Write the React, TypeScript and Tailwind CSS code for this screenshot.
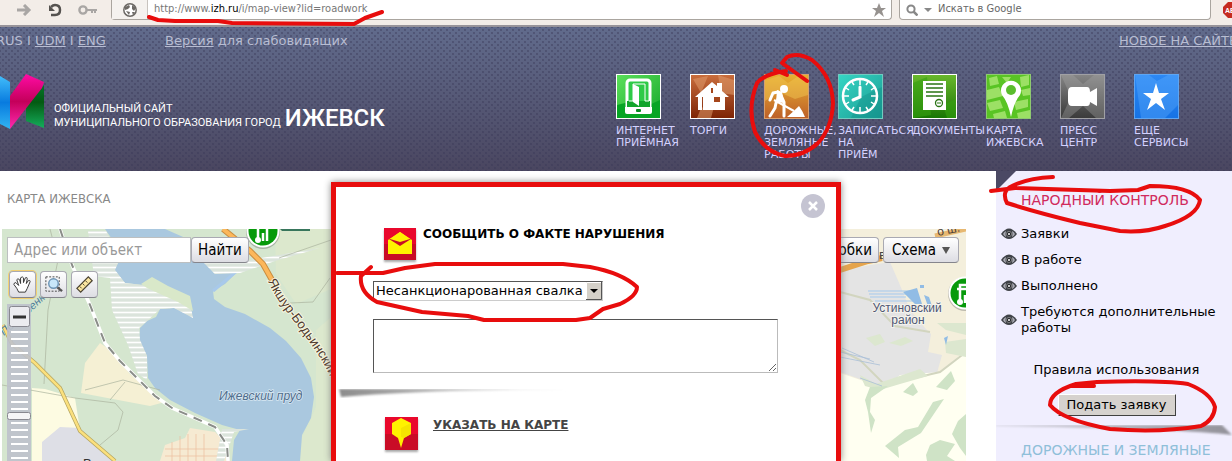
import type { ReactNode } from "react";

type NavItem = { label: string; lines: string[]; tile: string; icon: ReactNode };

const NAV_ITEMS: NavItem[] = [
  {
    label: "Интернет приёмная",
    lines: ["ИНТЕРНЕТ", "ПРИЁМНАЯ"],
    tile: "border-white bg-linear-to-br from-[#5ae05a] to-[#08a82c]",
    icon: (
      <>
        <path d="M0 30 16 26 30 31 43 25V43H0z" fill="#07a524" />
        <rect x="10" y="5" width="23" height="32" rx="3" fill="#2fca48" stroke="#fff" strokeWidth="3" />
        <path d="M10 26h23v6H10z" fill="#12a52c" />
        <path d="M8 32h27v5q0 2-2 2H10q-2 0-2-2z" fill="#fff" />
        <path d="M12 26h4V9h12v17h4" fill="none" stroke="#fff" />
        <path d="m16 9 6 3v19l-6-4z" fill="#fff" />
        <rect x="19" y="34" width="5" height="3" rx="1" fill="#078b22" />
      </>
    ),
  },
  {
    label: "Торги",
    lines: ["ТОРГИ"],
    tile: "border-white bg-linear-to-b from-[#c96d3c] to-[#7e2404]",
    icon: (
      <>
        <path d="M2 4 17 1 10 18zM27 0 43 5V20L30 18zM10 33 24 28 20 43H6z" fill="#de9a6c" opacity=".55" />
        <path d="M4 22 21 7l5 4V8h5v8l7 6h-4v13h-22v-13h-1v13H7V22z" fill="#fff" />
        <path d="M20 13h2v5h-2zM23 22h6v5h-6z" fill="#a6461b" />
      </>
    ),
  },
  {
    label: "Дорожные, земляные работы",
    lines: ["ДОРОЖНЫЕ,", "ЗЕМЛЯНЫЕ", "РАБОТЫ"],
    tile: "border-[#d8a070] bg-linear-to-b from-[#e8b030] to-[#bd6028]",
    icon: (
      <>
        <path d="M0 5 14 1 23 8 35 0 43 5V20L30 24 14 17 0 26z" fill="#f0c452" opacity=".5" />
        <circle cx="19" cy="14" r="4" fill="#fff" />
        <path d="m15 19-3 8M15 18l4 9v14M11 28l-1 5-5 8M13 17l-5 1-3 7" fill="none" stroke="#fff" strokeWidth="3" strokeLinecap="round" strokeLinejoin="round" />
        <path d="m12 15 5 2 2 11-8-1z" fill="#fff" />
        <path d="M9 25 29 36" stroke="#fff" strokeWidth="2" />
        <path d="M22 42q7-6 12-11 3 4 6 11z" fill="#fff" />
      </>
    ),
  },
  {
    label: "Записаться на приём",
    lines: ["ЗАПИСАТЬСЯ", "НА", "ПРИЁМ"],
    tile: "border-[#70cbbf] bg-linear-to-br from-[#36d6c4] to-[#199c94]",
    icon: (
      <>
        <path d="M22 22 43 12V43H12z" fill="#0f8a84" opacity=".35" />
        <circle cx="21" cy="21" r="17" fill="none" stroke="#fff" strokeWidth="2.5" />
        <path d="M21 5v5M21 32v5M5 21h5M32 21h5M13 7l2 3M27 32l2 3M7 13l3 2M32 27l3 2M29 7l-2 3M15 32l-2 3M35 13l-3 2M10 27l-3 2" stroke="#fff" strokeWidth="1.5" />
        <path d="M21 12v10l-7 3" fill="none" stroke="#fff" strokeWidth="3" strokeLinecap="round" />
      </>
    ),
  },
  {
    label: "Документы",
    lines: ["ДОКУМЕНТЫ"],
    tile: "border-white bg-linear-to-b from-[#68b82c] to-[#177604]",
    icon: (
      <>
        <path d="M0 8 14 2 18 40 0 43zM30 30 43 24V43H34z" fill="#35a210" opacity=".6" />
        <rect x="10" y="6" width="23" height="29" fill="#fff" />
        <path d="M13 9h17M13 13h17M13 17h17M13 21h17" stroke="#2a7414" strokeWidth="1.6" />
        <circle cx="26" cy="28" r="3.5" fill="none" stroke="#2a7414" strokeWidth="1.3" />
        <path d="M24 28h4" stroke="#2a7414" />
      </>
    ),
  },
  {
    label: "Карта Ижевска",
    lines: ["КАРТА", "ИЖЕВСКА"],
    tile: "border-[#8fca70] bg-[#59c424]",
    icon: (
      <>
        <path d="M2 3 10 1 12 9 3 11zM0 15 12 12 16 21 0 25zM15 2h9l-4 6zM33 2l9-2v10l-8 2zM0 28 13 25 16 33 3 36zM27 27l14-3v8l-12 3zM34 15l9-2v7l-7 1zM6 39l12-3 2 7H7zM30 38l13-3v8H31z" fill="#9ce065" />
        <path d="M24 42Q21 27 15 20A10 10 0 1 1 33 20Q27 27 24 42z" fill="#fff" />
        <circle cx="24" cy="15" r="5" fill="#59bd2c" />
      </>
    ),
  },
  {
    label: "Пресс центр",
    lines: ["ПРЕСС", "ЦЕНТР"],
    tile: "border-[#a0a0a4] bg-linear-to-b from-[#858585] to-[#3b3b3b]",
    icon: (
      <>
        <path d="M0 0H12L22 9 33 0H43V43H35L22 31 8 43H0L10 22z" fill="#aaa" opacity=".35" />
        <path d="M11 12h15q3 0 3 5l7-4v18l-7-4q0 4-3 4H11q-4 0-4-5v-9q0-5 4-5z" fill="#fff" />
      </>
    ),
  },
  {
    label: "Еще сервисы",
    lines: ["ЕЩЕ", "СЕРВИСЫ"],
    tile: "border-[#5ea5f2] bg-linear-to-b from-[#2c88f4] to-[#1673e5]",
    icon: (
      <>
        <path d="M0 0H14L22 6 33 0H43V30L30 43H6z" fill="#65b3ff" opacity=".35" />
        <path d="m21 8 3 10h10l-8 6 4 11-9-7-9 7 4-11-8-6h10z" fill="#fff" />
      </>
    ),
  },
];

const CONTROL_LINKS = ["Заявки", "В работе", "Выполнено", "Требуются дополнительные работы"];

const ZOOM_TICKS = Array.from({ length: 20 }, (_, i) => 332 + i * 7);

const BrowserBar = () => (
  <div className="flex h-[27px] items-start border-b-2 border-[#98949a] bg-[#f3ede8] font-['DejaVu_Sans_Condensed','DejaVu_Sans',sans-serif] text-[11px]">
    <div className="flex h-5 w-[111px] shrink-0 items-center gap-4 pl-4">
      <button type="button" aria-label="Вперёд">
        <svg className="h-3 w-4" viewBox="0 0 16 12">
          <path d="M1 6h11M8 1l5 5-5 5" fill="none" stroke="#a9a6a4" strokeWidth="3" />
        </svg>
      </button>
      <button type="button" aria-label="Обновить">
        <svg className="h-3.5 w-3.5" viewBox="0 0 14 14">
          <path d="M3 4q2-2 4-2 5 0 5 5t-5 5H3" fill="none" stroke="#55524f" strokeWidth="2.5" />
          <path d="M1 2v6h6z" fill="#55524f" />
        </svg>
      </button>
      <button type="button" aria-label="Пароли">
        <svg className="h-3 w-5" viewBox="0 0 20 12">
          <circle cx="5" cy="6" r="3.6" fill="none" stroke="#a9a6a4" strokeWidth="2.4" />
          <path d="M8 6h11M14 6v3M17 6v3" stroke="#a9a6a4" strokeWidth="2" />
        </svg>
      </button>
    </div>
    <div className="flex h-5 flex-1 items-center rounded-b border border-t-0 border-[#aaa59f] bg-white">
      <span className="flex h-full w-9 items-center justify-center border-r border-[#c8c3be] bg-[#f5f2ef]">
        <svg className="size-3.5" viewBox="0 0 14 14">
          <circle cx="7" cy="7" r="6.2" fill="#fff" stroke="#6c6965" strokeWidth="1.5" />
          <path d="M2 4l4-2 1 2-2 2-3 1zM9 2l4 3-2 3-2-2zM3 8l4 1-1 3zM9 9l3 0-2 3z" fill="#6c6965" />
        </svg>
      </span>
      <a href="#" className="flex-1 pl-1.5 text-[#777]">
        http://www.<span className="text-black">izh.ru</span>/i/map-view?lid=roadwork
      </a>
      <svg className="mr-1 size-4" viewBox="0 0 16 16">
        <path d="m8 1 2 5h5l-4 3 2 6-5-4-5 4 2-6-4-3h5z" fill="#96928f" />
      </svg>
    </div>
    <label className="ml-[7px] flex h-5 w-[312px] items-center gap-1.5 rounded-b border border-t-0 border-[#aaa59f] bg-white px-1.5">
      <svg className="size-3" viewBox="0 0 12 12">
        <circle cx="5" cy="5" r="3.6" fill="none" stroke="#888" strokeWidth="2" />
        <path d="m7.5 7.5 4 4" stroke="#888" strokeWidth="2.5" />
      </svg>
      <svg className="h-1 w-2" viewBox="0 0 8 4">
        <path d="M0 0h8L4 4z" fill="#888" />
      </svg>
      <input
        aria-label="Поиск"
        placeholder="Искать в Google"
        className="min-w-0 flex-1 outline-none placeholder:text-[#666]"
      />
    </label>
    <div className="w-[21px] shrink-0 overflow-hidden pl-3">
      <svg className="mt-0.5 h-4 w-4 max-w-none" viewBox="0 0 16 16">
        <path d="M5 0h6l5 5v6l-5 5H5l-5-5V5z" fill="#c52b20" />
        <text x="2" y="11" fontSize="7" fontWeight="bold" fill="#fff" fontFamily="Liberation Sans">
          ABP
        </text>
      </svg>
    </div>
  </div>
);

const Logo = () => (
  <div className="flex h-14 items-end">
    <svg className="h-14 w-[46px] shrink-0" viewBox="0 0 46 56">
      <defs>
        <linearGradient id="logoBlue" x2="0" y2="1">
          <stop stopColor="#42bdfa" />
          <stop offset=".5" stopColor="#087bdf" />
          <stop offset="1" stopColor="#32b4f2" />
        </linearGradient>
        <linearGradient id="logoPink" x2="0" y2="1">
          <stop stopColor="#ff0ba5" />
          <stop offset=".5" stopColor="#c4005a" />
          <stop offset="1" stopColor="#ff2ab0" />
        </linearGradient>
        <linearGradient id="logoGreen" x2="0" y2="1">
          <stop stopColor="#06752b" />
          <stop offset=".4" stopColor="#035a12" />
          <stop offset="1" stopColor="#15ad5c" />
        </linearGradient>
      </defs>
      <path d="M0 2 10 8V55L0 50z" fill="url(#logoBlue)" />
      <path d="M26 30 44 11V54L26 47z" fill="url(#logoGreen)" />
      <path d="M10 22 26 0 44 8 42 14 10 55z" fill="url(#logoPink)" />
    </svg>
    <div className="flex items-end gap-1 pl-2 font-[Roboto,sans-serif] whitespace-nowrap text-white">
      <p className="text-[11px] leading-[14px]">
        ОФИЦИАЛЬНЫЙ САЙТ
        <br />
        МУНИЦИПАЛЬНОГО ОБРАЗОВАНИЯ ГОРОД
      </p>
      <strong className="text-2xl leading-6 font-medium">ИЖЕВСК</strong>
    </div>
  </div>
);

const SiteHeader = () => (
  <header className="h-36 overflow-hidden bg-[radial-gradient(circle,#39385766_1px,transparent_1px),radial-gradient(circle,#39385766_1px,transparent_1px),linear-gradient(#616b8c,#4a4660)] bg-[length:6px_6px,6px_6px,100%_100%] bg-[position:0_0,3px_3px,0_0]">
    <div className="flex h-7 items-center justify-between whitespace-nowrap text-[13px] text-[#b8bdd2]">
      <div className="-ml-1 flex">
        <p className="w-[169px]">
          RUS I{" "}
          <a href="#" className="underline">
            UDM
          </a>{" "}
          I{" "}
          <a href="#" className="underline">
            ENG
          </a>
        </p>
        <p>
          <a href="#" className="underline">
            Версия
          </a>{" "}
          для слабовидящих
        </p>
      </div>
      <a href="#" className="w-[113px] underline">
        НОВОЕ НА САЙТЕ
      </a>
    </div>
    <div className="flex pt-[19px]">
      <div className="w-1/2">
        <Logo />
      </div>
      <nav className="flex w-1/2">
        {NAV_ITEMS.map((item) => (
          <a
            key={item.label}
            href="#"
            className="w-[74px] shrink-0 font-['DejaVu_Sans',sans-serif] text-[11px] leading-3 whitespace-nowrap text-[#d4d2ff]"
          >
            <span className={`mb-1.5 block size-[45px] border ${item.tile}`}>
              <svg className="size-full" viewBox="0 0 43 43">
                {item.icon}
              </svg>
            </span>
            {item.lines.map((line) => (
              <span key={line} className="block">
                {line}
              </span>
            ))}
          </a>
        ))}
      </nav>
    </div>
  </header>
);

const CraneMarker = ({ cx, cy }: { cx: number; cy: number }) => (
  <g transform={`translate(${cx} ${cy})`}>
    <circle r="17" cy="1" fill="#555" opacity=".35" />
    <circle r="16.5" fill="#fff" />
    <circle r="14.5" fill="#079a0b" />
    <path d="M-5 10V-8H8M-8-4H8M0 10V2M4 10V-2" fill="none" stroke="#fff" strokeWidth="2.5" />
    <circle cx="-5" cy="9" r="3" fill="#fff" />
  </g>
);

const MapCanvas = () => (
  <svg className="block h-full w-full" viewBox="2 229 964 232" preserveAspectRatio="xMinYMin slice" fontFamily="Liberation Sans, sans-serif">
    <defs>
      <pattern id="marsh" width="10" height="5" patternUnits="userSpaceOnUse">
        <path d="M0 2.5h10" stroke="#fff" strokeWidth="1.6" />
      </pattern>
      <path id="highway" d="M268 281C280 310 310 335 330 376" />
    </defs>
    <path d="M0 229H840V461H0z" fill="#d5e6cf" />
    <path d="M32 388 45 389 75 398 80 430 110 461H32z" fill="#fdfbe2" />
    <path d="M100 343 85 363 81 393 150 406 165 402 130 374 110 350z" fill="#f5f0d4" />
    <path d="M42 442 60 427 80 428 92 440 115 461H42z" fill="#dedfe6" />
    <path d="M165 445 185 438 190 428 215 432 228 445 226 461H160z" fill="#f6ead2" />
    <path d="M172 461V442M180 461V436M188 461V434M196 461V434M204 461V434M165 449H224M165 456H225" stroke="#edbd9f" strokeWidth=".7" />
    <path d="M275 229h56v60l-35 15-20-30zM316 330l14-12v143h-30l2-24 14-30z" fill="#dce8cd" />
    <path d="M105 229H165L190 240 205 262 215 274 238 271 225 284 213 291 214 299 225 307 245 314 270 328 286 341 301 358 311 378 314 397 311 418 302 435 300 461H232L234 440 240 430 222 425 195 413 170 400 155 388 148 378 147 356 139 340 140 328 147 321 156 317 160 309 174 308 192 315 190 303 180 296 163 289 152 281 143 285 125 283 114 270 123 255z" fill="#aac8df" />
    <path d="M213 291 238 270 280 257" fill="none" stroke="#a8c9eb" strokeWidth="3" />
    <path d="M88 231H106L120 258 115 270 125 283 143 285 152 282 162 289 170 296 190 303 193 318 174 308 160 309 147 321 139 328 140 340 147 356 147 380 138 374 128 345 112 310 110 278 94 276zM203 262 232 263 320 248 275 261 240 273 215 274zM222 429h27l-15 3-10 29h-8z" fill="#dbe4dc" />
    <path d="M88 231H106L120 258 115 270 125 283 143 285 152 282 162 289 170 296 190 303 193 318 174 308 160 309 147 321 139 328 140 340 147 356 147 380 138 374 128 345 112 310 110 278 94 276zM203 262 232 263 320 248 275 261 240 273 215 274zM222 429h27l-15 3-10 29h-8z" fill="url(#marsh)" />
    <path d="M141 284 152 277 168 286 190 296 193 311 178 302 160 294 147 288z" fill="#d9e8c9" />
    <path d="M2 385 75 398 115 403 123 412 118 430 100 445M50 229 58 260 48 310 44 384M160 390 123 380 85 390M290 303 313 302 330 278M279 258l52-18M110 400l15-18" fill="none" stroke="#aab39e" strokeWidth=".7" />
    <path d="M60 229 72 265 90 305 105 343 120 361 155 396 172 408 215 427 227 445 228 461" fill="none" stroke="#fff" strokeWidth="3.5" />
    <path d="M60 229 72 265 90 305 105 343 120 361 155 396 172 408 215 427 227 445 228 461" fill="none" stroke="#8a8d88" strokeWidth="2" strokeDasharray="9 7" />
    <path d="M3 325 12 344 35 363 60 388 80 431 115 461" fill="none" stroke="#b5a560" strokeWidth="4" />
    <path d="M3 325 12 344 35 363 60 388 80 431 115 461" fill="none" stroke="#fbe07d" strokeWidth="2.5" />
    <path d="M223 229 250 251 263 264 272 280" fill="none" stroke="#c98d40" strokeWidth="6" />
    <path d="M223 229 250 251 263 264 272 280" fill="none" stroke="#fcb75a" strokeWidth="4" />
    <text fontSize="13" fill="#4e3b2e" stroke="#f8f5df" strokeWidth="2" paintOrder="stroke">
      <textPath href="#highway">Якшур-Бодьинский</textPath>
    </text>
    <text x="219" y="400" fontSize="12" fontStyle="italic" fill="#4f6d8b" stroke="#d8e7f2" strokeWidth="1.5" paintOrder="stroke">
      Ижевский пруд
    </text>
    <text x="83" y="468" fontSize="13" fill="#333">
      Вороженно
    </text>
    <text x="4" y="336" fontSize="11" fontStyle="italic" fill="#4f7d9b" transform="rotate(-42 4 336)">
      Подборенка
    </text>
    <CraneMarker cx={263} cy={231} />
    <path d="M280 229h30v2h-28z" fill="#38765c" />

    <path d="M840 229H966V461H840z" fill="#f4efdc" />
    <path d="M840 270 890 262 900 285 910 310 925 328 931 334 928 352 942 355 937 373 890 379 885 388 840 372z" fill="#e4e4e4" />
    <path d="M840 373 884 388 900 375 940 372 966 350V461H840z" fill="#fffff1" />
    <path d="M840 292 870 300 895 326 930 332M840 350 860 360 885 385 940 372 966 352" fill="none" stroke="#d2d5bf" strokeWidth="2" />
    <path d="M866 338l14-4 5 8-10 4zM889 343l16-6 8 4-12 5zM860 375 876 384 920 369 928 376 900 384 880 390 865 386zM937 323h29v12l-20-5zM945 342l21-3v18l-20-4z" fill="#dce7cf" />
    <path d="M865 400 870 387 888 386 871 398 870 412 875 420 871 433 868 412zM885 446 905 430 918 427 933 402 944 399 921 433 898 447 899 458zM903 392l10-9 5 9-5 4zM936 387l15-16 4 10-8 9zM926 455l4-10 10-5 15 4-8 12 8 5h-28zM958 421l8-7v42l-6-8-8-14z" fill="#cfe3c6" />
    <path d="M868 291h42M869 294h39M870 297h36M875 301h40" stroke="#a4c9ed" strokeWidth="1" />
    <path d="M903 292 917 288 922 304 915 304zM924 295l5 2 3 9-3 3zM920 285h4v3h-4zM944 338l4-2-2 9z" fill="#91bce5" />
    <path d="M840 270 868 261 882 258" fill="none" stroke="#e5a44c" strokeWidth="6" />
    <path d="M840 357 880 365M842 348l32 14M860 378l22 8M840 352l30 7" stroke="#a9bfd7" strokeWidth=".8" />
    <path d="M935 236 966 229" stroke="#e7b871" strokeWidth="5" />
    <text x="938" y="236" fontSize="12" fill="#4d4039" transform="rotate(-12 938 236)">
      о ш.
    </text>
    <text x="879" y="259" fontSize="13" fill="#444">
      в
    </text>
    <g fontSize="12" textAnchor="middle" fill="#4f5773" stroke="#f4f3ed" strokeWidth="2" paintOrder="stroke">
      <text x="907" y="312">
        Устиновский
      </text>
      <text x="908" y="324">
        район
      </text>
    </g>
    <CraneMarker cx={965} cy={293} />
  </svg>
);

const MAP_BUTTON =
  "border border-[#a9a9b2] border-b-[#85858c] bg-linear-to-b from-white to-[#dddde3] rounded-sm";

const MapPanel = () => (
  <section className="min-w-0 flex-1 pl-0.5">
    <h1 className="flex h-14 items-center pl-[5px] font-['DejaVu_Sans_Condensed','DejaVu_Sans',sans-serif] text-[13px] text-[#888]">
      КАРТА ИЖЕВСКА
    </h1>
    <div className="relative mt-0.5 h-[232px] overflow-hidden font-['DejaVu_Sans_Condensed','DejaVu_Sans',sans-serif]">
      <MapCanvas />
      <div className="absolute inset-x-0 top-2 flex items-start justify-between pr-[7px] pl-[5px] text-[15px]">
        <form className="flex h-[26px]">
          <input
            aria-label="Адрес или объект"
            placeholder="Адрес или объект"
            className="w-[184px] border border-[#bcbfc0] bg-white pl-1.5 placeholder:text-[#999]"
          />
          <button type="button" className={`w-[58px] ${MAP_BUTTON}`}>
            Найти
          </button>
        </form>
        <div className="flex h-[26px] gap-1">
          <button type="button" className={`px-1.5 ${MAP_BUTTON}`}>
            Пробки
          </button>
          <button type="button" className={`flex w-[76px] items-center justify-center gap-1.5 ${MAP_BUTTON}`}>
            Схема
            <svg className="h-[7px] w-2" viewBox="0 0 8 7">
              <path d="M0 0h8L4 7z" fill="#555" />
            </svg>
          </button>
        </div>
      </div>
      <div className="absolute top-[42px] left-[7px] flex gap-1">
        <button type="button" aria-label="Переместить карту" className={`size-[27px] p-0.5 ring-1 ring-[#f1cf72] ${MAP_BUTTON}`}>
          <svg viewBox="0 0 22 22">
            <path d="M7 19 5 15 2 11q0-2 2-2l3 3-2-6q1-2 3 0l1 4V4q2-2 3 0v5l2-5q2-1 2 1l-1 5 2-3q2-1 2 1l-3 7-2 4z" fill="#fff" stroke="#333" />
          </svg>
        </button>
        <button type="button" aria-label="Увеличить область" className={`size-[27px] p-0.5 ${MAP_BUTTON}`}>
          <svg viewBox="0 0 22 22">
            <path d="M3 3h14v15H3z" fill="none" stroke="#444" strokeDasharray="2 1.5" />
            <circle cx="11" cy="10" r="5" fill="#c9e7fa" stroke="#6d94b5" strokeWidth="1.5" />
            <path d="m15 14 5 4" stroke="#555" strokeWidth="2.5" />
          </svg>
        </button>
        <button type="button" aria-label="Измерить расстояние" className={`size-[27px] p-0.5 ${MAP_BUTTON}`}>
          <svg viewBox="0 0 22 22">
            <path d="M3 15 15 3l4 4L7 19z" fill="#fbe6a0" stroke="#4a4331" strokeWidth="1.3" />
            <path d="m6 13 2 2m1-5 2 2m1-5 2 2" stroke="#4a4331" />
          </svg>
        </button>
      </div>
      <svg className="absolute top-[75px] left-[5px] h-[157px] w-6" viewBox="7 304 24 157">
        <path d="M7 304h24v157H7z" fill="#bec1cb" opacity=".9" />
        {ZOOM_TICKS.map((y) => (
          <path key={y} d={`M11 ${y}h17`} stroke="#fff" strokeWidth="2" />
        ))}
        <rect x="9.5" y="306.5" width="20" height="20" rx="2" fill="#ececf0" stroke="#888890" />
        <path d="M13 317h13" stroke="#333" strokeWidth="3" />
        <rect x="7.5" y="412.5" width="23" height="7" rx="2" fill="#f5f5f7" stroke="#888890" />
      </svg>
    </div>
  </section>
);

const EyeIcon = () => (
  <svg className="h-3 w-4 shrink-0" viewBox="0 0 16 12">
    <path d="M0 6Q8-5 16 6 8 16 0 6z" fill="#3f4247" />
    <path d="M2 6q1-2 3-3-1 3 0 6-2-1-3-3zM14 6q-1-2-3-3 1 3 0 6 2-1 3-3z" fill="#a9a9b2" />
    <circle cx="8" cy="6" r="2.6" fill="#25272b" stroke="#999" strokeWidth=".7" />
    <circle cx="8" cy="6" r="1" fill="#fff" />
  </svg>
);

const Sidebar = () => (
  <aside className="relative w-[236px] shrink-0 bg-[#f0eefe] text-[13px] leading-4">
    <svg className="absolute top-0 left-0 h-5 w-5" viewBox="0 0 20 20">
      <path d="M0 0h20L0 20z" fill="#4b4964" />
    </svg>
    <div className="h-[254px] pt-[21px] pl-[5px]">
      <h2 className="pl-5 text-sm leading-4 whitespace-nowrap text-[#d02a5c]">НАРОДНЫЙ КОНТРОЛЬ</h2>
      <ul className="flex flex-col gap-2.5 pt-[18px]">
        {CONTROL_LINKS.map((text) => (
          <li key={text}>
            <a href="#" className="flex items-center gap-1 text-black">
              <EyeIcon />
              <span>{text}</span>
            </a>
          </li>
        ))}
      </ul>
      <div className="flex flex-col items-center gap-4 pt-[26px]">
        <a href="#" className="text-black">
          Правила использования
        </a>
        <button
          type="button"
          className="h-[22px] w-[118px] border border-t-white border-r-[#404040] border-b-[#404040] border-l-white bg-[#d6d2ce] whitespace-nowrap text-black"
        >
          Подать заявку
        </button>
      </div>
    </div>
    <svg className="block h-3 w-full" viewBox="0 0 236 12">
      <defs>
        <linearGradient id="cardShadow">
          <stop stopColor="#d4d3de" />
          <stop offset="1" stopColor="#929199" />
        </linearGradient>
        <filter id="cardBlur">
          <feGaussianBlur stdDeviation="1.2" />
        </filter>
      </defs>
      <path d="M0 0H226L236 10Q190 4 0 1z" fill="url(#cardShadow)" filter="url(#cardBlur)" />
    </svg>
    <h2 className="pt-[5px] pl-[25px] text-sm leading-4 whitespace-nowrap text-[#8fbfd9]">ДОРОЖНЫЕ И ЗЕМЛЯНЫЕ</h2>
  </aside>
);

const ReportDialog = () => (
  <div
    role="dialog"
    aria-label="Сообщить о факте нарушения"
    className="absolute top-[11px] bottom-0 left-[331px] w-[510px] border-[5px] border-b-0 border-[#e80d0d] bg-white shadow-[0_0_7px_#888]"
  >
    <div className="flex justify-end pt-[7px] pr-[11px]">
      <button type="button" aria-label="Закрыть" className="size-6 rounded-full bg-[#c5c4d2]">
        <svg viewBox="0 0 24 24">
          <path d="m8 8 8 8m0-8-8 8" stroke="#fff" strokeWidth="2.5" />
        </svg>
      </button>
    </div>
    <div className="flex gap-[7px] pt-2.5 pl-12">
      <svg className="size-8 shrink-0 shadow-[0_2px_2px_#aaa]" viewBox="0 0 32 32">
        <path d="M0 0h32v32H0z" fill="#e9082c" />
        <path d="M0 16h32v16H0z" fill="#c90c26" />
        <path d="M4 12 16 4l12 8v14H4z" fill="#fff200" />
        <path d="M5 11h22l-11 7z" fill="#c90c26" />
        <path d="M6 11 16 4l10 7-10 3z" fill="#fff200" />
      </svg>
      <h2 className="text-xs leading-3 font-bold whitespace-nowrap text-black">СООБЩИТЬ О ФАКТЕ НАРУШЕНИЯ</h2>
    </div>
    <form className="pt-[21px] pl-[37px]">
      <div className="relative w-[230px]">
        <select
          aria-label="Вид нарушения"
          className="block h-5 w-full appearance-none border border-t-[#555] border-r-[#ccc] border-b-[#ccc] border-l-[#555] bg-white pl-0.5 text-[13px] leading-4 text-black"
        >
          <option>Несанкционарованная свалка</option>
        </select>
        <svg className="pointer-events-none absolute top-px right-px h-[18px] w-4" viewBox="0 0 16 18">
          <path d="M0 0h16v18H0z" fill="#d4d0c8" />
          <path d="M.5 17V.5H15" fill="none" stroke="#fff" />
          <path d="M15.5 0v17.5H0" fill="none" stroke="#555" />
          <path d="M4 7h8l-4 4z" />
        </svg>
      </div>
      <textarea
        aria-label="Описание нарушения"
        className="mt-[18px] block h-[54px] w-[405px] resize border border-t-[#555] border-r-[#bbb] border-b-[#bbb] border-l-[#555] bg-white"
      />
    </form>
    <svg className="mt-4 h-3 w-60" viewBox="0 0 240 12">
      <defs>
        <linearGradient id="dividerShadow">
          <stop stopColor="#8c8c8c" />
          <stop offset="1" stopColor="#eee" />
        </linearGradient>
        <filter id="dividerBlur">
          <feGaussianBlur stdDeviation="1" />
        </filter>
      </defs>
      <path d="M3 0H235Q80 1 5 8z" fill="url(#dividerShadow)" filter="url(#dividerBlur)" />
    </svg>
    <div className="flex gap-[15px] pt-4 pl-[49px]">
      <svg className="size-[33px] shrink-0 shadow-[0_2px_2px_#aaa]" viewBox="0 0 33 33">
        <path d="M0 0h33v33H0z" fill="#e9082c" />
        <path d="M0 17h33v16H0z" fill="#c90c26" />
        <path d="m16 1 10 5v11l-7 4-3 10-3-10-6-4V6z" fill="#fff200" />
        <path d="m16 11 10-5v11l-7 4-3-1z" fill="#f5e400" />
      </svg>
      <a href="#" className="text-xs leading-4 font-bold whitespace-nowrap text-[#444] underline">
        УКАЗАТЬ НА КАРТЕ
      </a>
    </div>
  </div>
);

// Hand-drawn red marker strokes over the whole page
const MarkerStrokes = () => (
  <svg
    className="pointer-events-none absolute inset-0 h-full w-full"
    viewBox="0 0 1232 461"
    preserveAspectRatio="none"
    fill="none"
    stroke="#e80d0d"
    strokeWidth="4"
    strokeLinecap="round"
    strokeLinejoin="round"
  >
    <path d="M149 17 158 20 175 21H218L232 23 354 24 365 18 382 12" />
    <path d="M807 81 782 63 787 57Q798 52 812 60 832 76 833 103 832 128 818 143 804 156 785 156 765 152 755 132 747 108 757 83 764 74 786 71" />
    <path d="M775 70 787 75" />
    <path d="M337 273H383L405 268 435 264H563L590 267Q622 273 637 287 637 296 620 304L603 309 590 318 576 320H484L468 316 422 312 377 302Q359 292 361 276L371 267" />
    <path d="M991 191 1015 188 1110 191 1138 190 1150 186Q1190 186 1200 200 1198 216 1165 226 1145 233 1120 231L1080 223Q1035 212 1007 203 1001 191 1012 186 1028 178 1053 177" />
    <path d="M1070 386H1094M1076 384 1097 382Q1160 380 1188 384 1211 393 1215 407 1214 420 1201 426 1160 433 1110 429 1062 420 1050 405 1050 392 1076 384" />
  </svg>
);

const App = () => (
  <div className="relative overflow-hidden bg-white font-['DejaVu_Sans',Verdana,sans-serif]">
    <BrowserBar />
    <SiteHeader />
    <main className="relative flex gap-[30px]">
      <MapPanel />
      <Sidebar />
      <ReportDialog />
    </main>
    <MarkerStrokes />
  </div>
);

export default App;
